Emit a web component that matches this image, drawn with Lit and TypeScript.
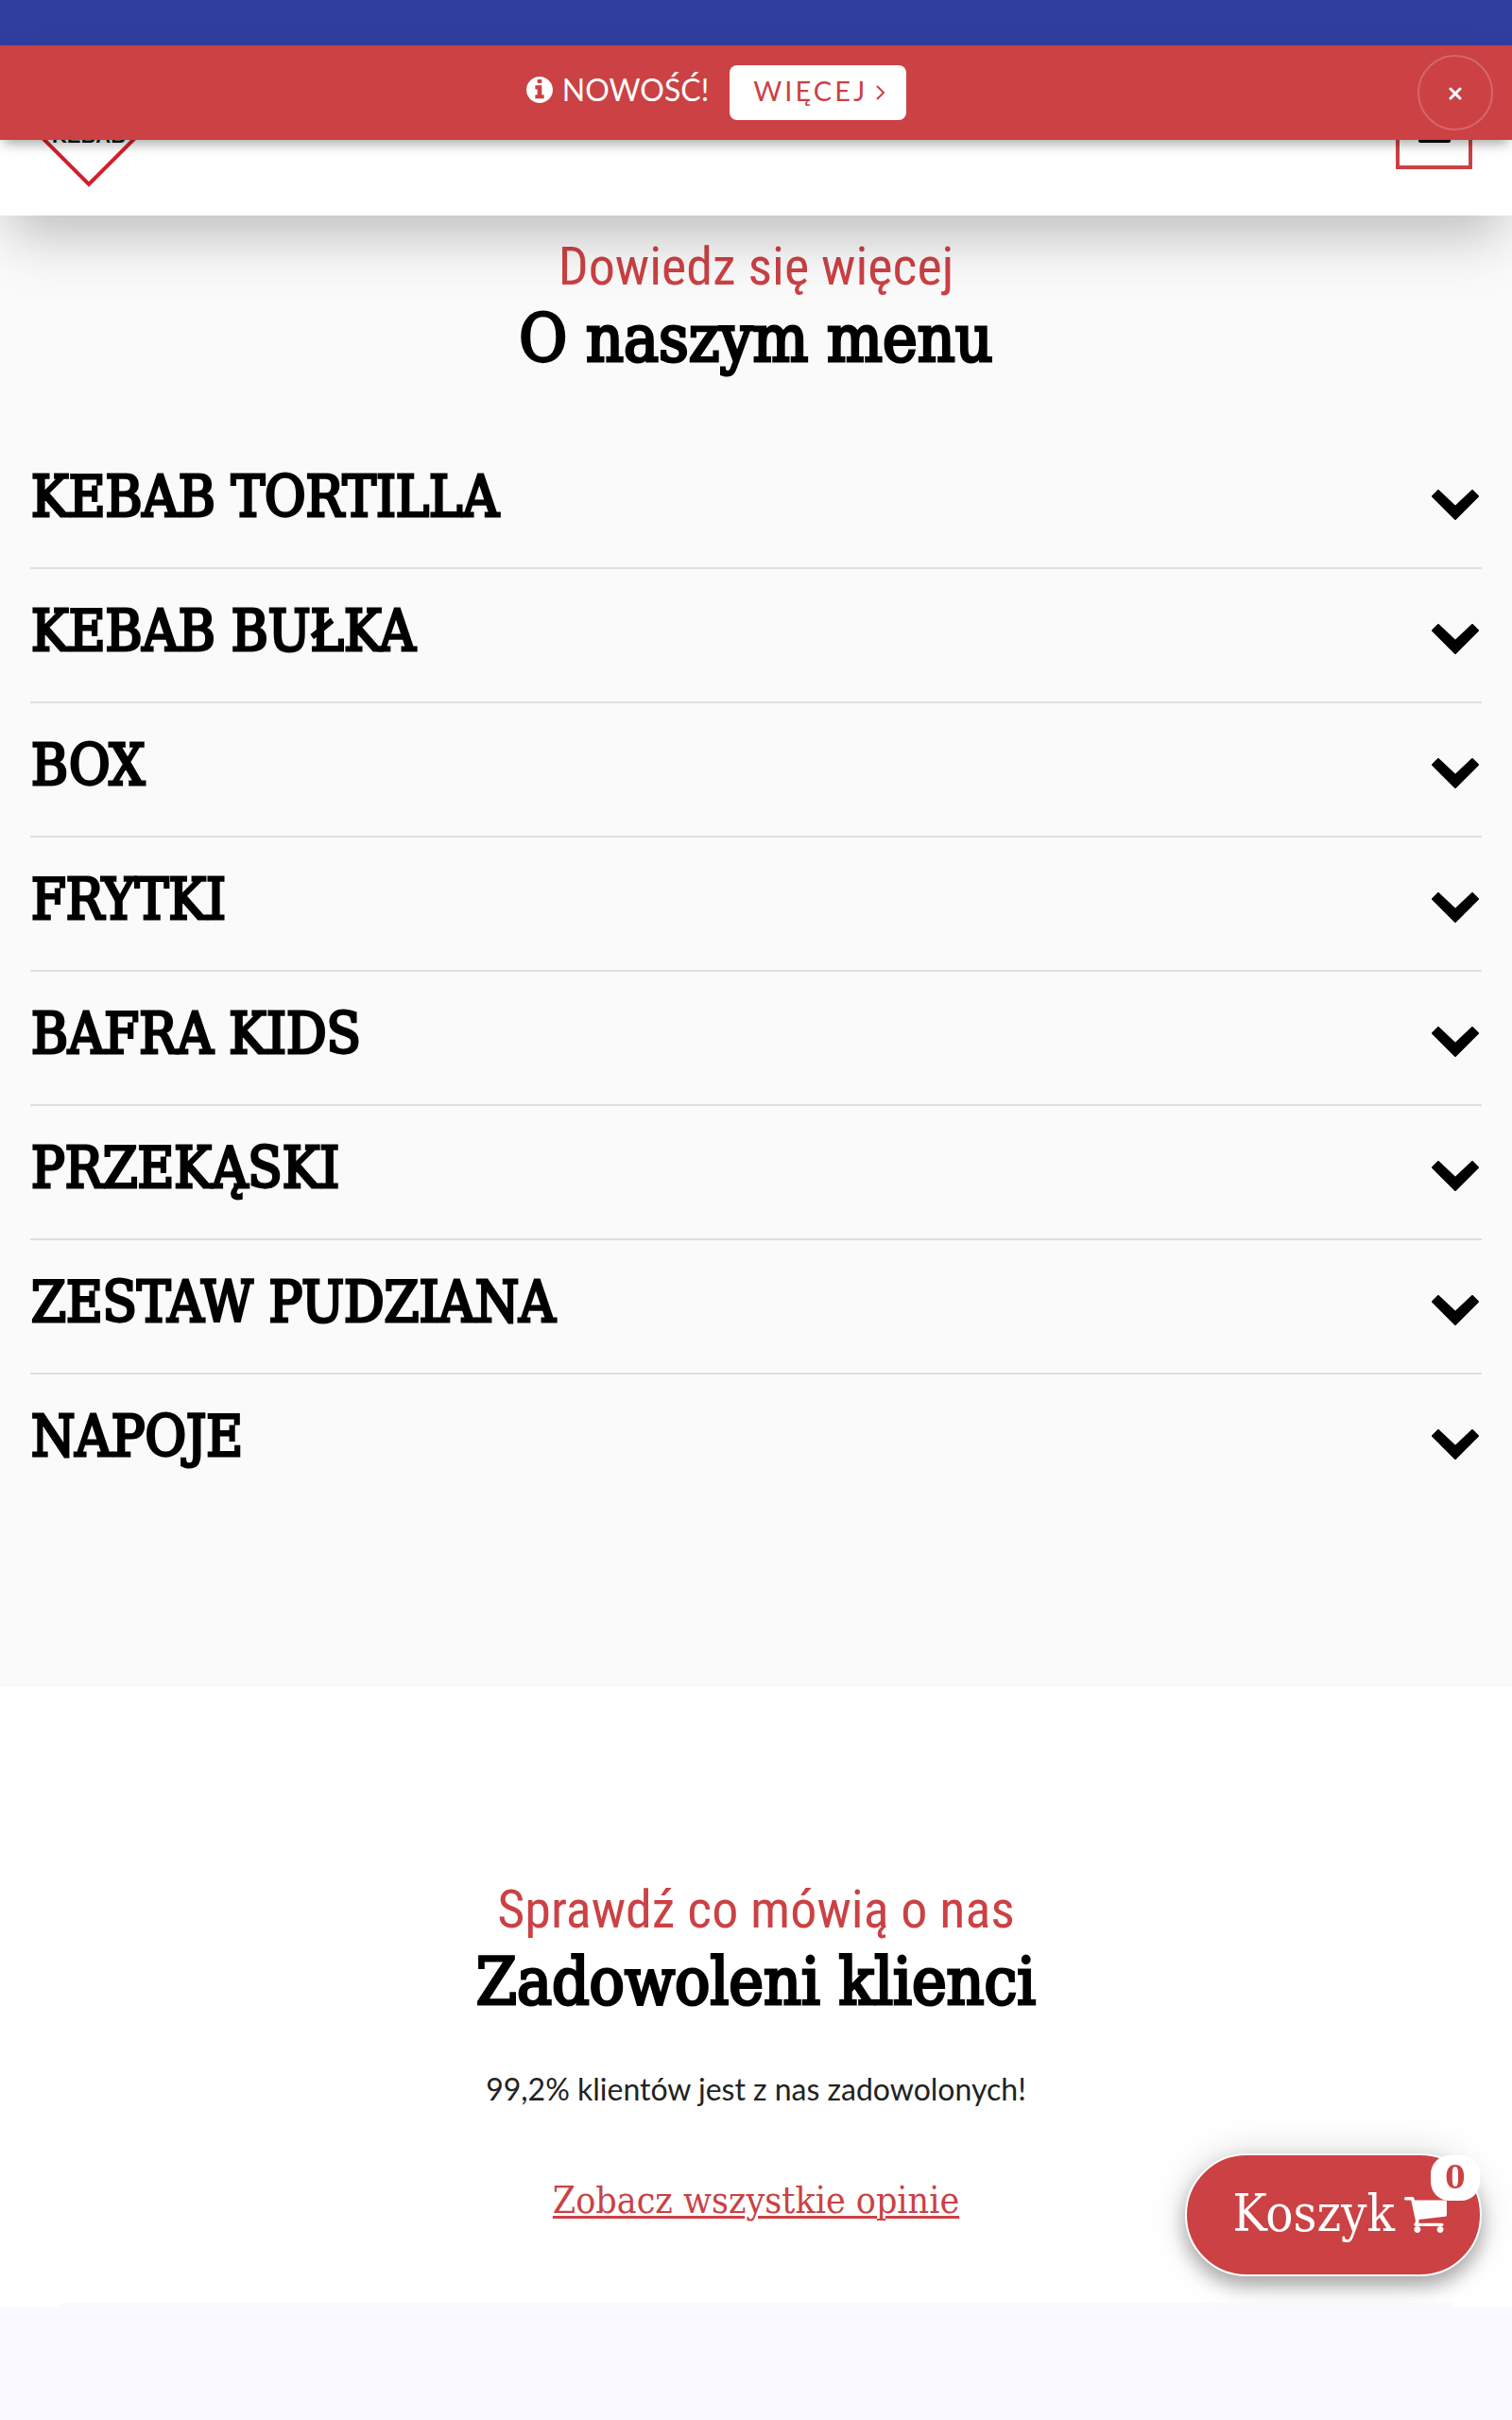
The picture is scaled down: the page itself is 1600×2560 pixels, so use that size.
import { LitElement, html, css, svg } from "lit";
import { customElement, property, state } from "lit/decorators.js";

const MENU = [
  "KEBAB TORTILLA",
  "KEBAB BUŁKA",
  "BOX",
  "FRYTKI",
  "BAFRA KIDS",
  "PRZEKĄSKI",
  "ZESTAW PUDZIANA",
  "NAPOJE",
];

const infoIcon = svg`<path d="M1152 1376v-160q0-14-9-23t-23-9h-96v-512q0-14-9-23t-23-9h-320q-14 0-23 9t-9 23v160q0 14 9 23t23 9h96v320h-96q-14 0-23 9t-9 23v160q0 14 9 23t23 9h448q14 0 23-9t9-23zm-128-896v-160q0-14-9-23t-23-9h-192q-14 0-23 9t-9 23v160q0 14 9 23t23 9h192q14 0 23-9t9-23zm640 416q0 209-103 385.500t-279.500 279.500-385.500 103-385.500-103-279.500-279.500-103-385.500 103-385.500 279.500-279.500 385.500-103 385.500 103 279.500 279.500 103 385.500z"/>`;

const cartIcon = svg`<path d="M640 1536q0 52-38 90t-90 38-90-38-38-90 38-90 90-38 90 38 38 90zm896 0q0 52-38 90t-90 38-90-38-38-90 38-90 90-38 90 38 38 90zm128-1088v512q0 24-16.500 42.500t-40.500 21.500l-1044 122q13 60 13 70 0 16-24 64h920q26 0 45 19t19 45-19 45-45 19h-1024q-26 0-45-19t-19-45q0-11 8-31.500t16-36 21.500-40 15.500-29.500l-177-823h-204q-26 0-45-19t-19-45 19-45 45-19h256q16 0 28.500 6.500t19.500 15.500 13 24.500 8 26 5.500 29.500 4.500 26h1201q26 0 45 19t19 45z"/>`;

@customElement("site-header")
export class SiteHeader extends LitElement {
  static styles = css`
    :host {
      display: block;
      position: relative;
      z-index: 1;
      font-family: Lato, "Liberation Sans", sans-serif;
    }
    .strip {
      height: 48px;
      background: #303e9f;
    }
    .bar {
      display: flex;
      align-items: center;
      justify-content: space-between;
      height: 180px;
      padding: 0 42px 0 34px;
      box-sizing: border-box;
      background: #fff;
      box-shadow: 0 30px 60px -10px rgba(0, 0, 0, 0.25);
    }
    .logo,
    .logo svg {
      display: block;
    }
    .burger {
      display: flex;
      flex-direction: column;
      align-items: center;
      justify-content: center;
      gap: 4px;
      width: 81px;
      height: 81px;
      padding: 0;
      border: 4px solid #cb4144;
      background: #fff;
    }
    .line {
      width: 34px;
      height: 6px;
      border-radius: 2px;
      background: #000;
    }
    .notice {
      position: absolute;
      top: 48px;
      left: 0;
      right: 0;
      display: flex;
      align-items: center;
      height: 100px;
      padding-right: 20px;
      box-sizing: border-box;
      background: #cb4144;
      color: #fff;
      box-shadow: 0 8px 12px -4px rgba(0, 0, 0, 0.35);
    }
    .message {
      flex: 1;
      display: flex;
      align-items: center;
      justify-content: center;
      gap: 22px;
      padding-left: 16px;
    }
    .label {
      display: flex;
      align-items: center;
      gap: 10px;
      padding-bottom: 6px;
      font-size: 32px;
      line-height: 40px;
    }
    .more {
      display: flex;
      align-items: center;
      gap: 8px;
      height: 58px;
      padding: 0 21px 0 25px;
      box-sizing: border-box;
      border-radius: 8px;
      background: #fff;
      color: #cb4144;
      font-size: 29px;
      line-height: 40px;
      letter-spacing: 3px;
      text-decoration: none;
    }
    .more span {
      padding-bottom: 4px;
    }
    .close {
      display: flex;
      align-items: center;
      justify-content: center;
      width: 80px;
      height: 80px;
      padding: 0;
      border: 2px solid rgba(255, 255, 255, 0.2);
      border-radius: 50%;
      background: none;
    }
  `;

  @state() private noticeOpen = true;

  render() {
    return html`
      <div class="strip"></div>
      <header class="bar">
        <a class="logo" href="#" aria-label="Kebab">
          <svg width="120" height="120" viewBox="0 0 120 120">
            <path d="M60 3 117 60 60 117 3 60Z" fill="#fff" stroke="#d2202c" stroke-width="4" />
            <text x="60" y="73" text-anchor="middle" font-family="Liberation Sans, sans-serif" font-weight="700" font-size="22" fill="#111">KEBAB</text>
          </svg>
        </a>
        <button class="burger" type="button" aria-label="Menu">
          <span class="line"></span><span class="line"></span><span class="line"></span>
        </button>
      </header>
      ${this.noticeOpen
        ? html`<div class="notice" role="status">
            <div class="message">
              <span class="label">
                <svg width="28" height="28" viewBox="128 128 1536 1536" fill="currentColor">${infoIcon}</svg>
                NOWOŚĆ!
              </span>
              <a class="more" href="#nowosc">
                <span>WIĘCEJ</span>
                <svg width="12" height="18" viewBox="0 0 12 18" fill="none" stroke="currentColor" stroke-width="2">
                  <path d="M2 2 9 9 2 16" />
                </svg>
              </a>
            </div>
            <button class="close" type="button" aria-label="Zamknij" @click=${() => (this.noticeOpen = false)}>
              <svg width="16" height="16" viewBox="0 0 16 16" stroke="#fff" stroke-width="3" stroke-linecap="round">
                <path d="M3 4 13 14M13 4 3 14" />
              </svg>
            </button>
          </div>`
        : null}
    `;
  }
}

@customElement("section-title")
export class SectionTitle extends LitElement {
  static styles = css`
    :host {
      display: block;
      text-align: center;
    }
    .kicker {
      margin: 0;
      color: #cb4144;
      font: 400 56px/72px "Roboto Condensed", "Liberation Sans Narrow", sans-serif;
    }
    .title {
      margin: 0;
      color: #000;
      font: 400 69px/80px "DejaVu Serif Condensed", "DejaVu Serif", serif;
      -webkit-text-stroke: 3px #000;
    }
  `;

  @property() kicker = "";
  @property() heading = "";

  render() {
    return html`<p class="kicker">${this.kicker}</p>
      <h2 class="title">${this.heading}</h2>`;
  }
}

@customElement("menu-list")
export class MenuList extends LitElement {
  static styles = css`
    :host {
      display: block;
    }
    .list {
      list-style: none;
      margin: 0;
      padding: 0;
    }
    .item + .item {
      border-top: 2px solid #dfdfdf;
    }
    .row {
      display: flex;
      align-items: center;
      justify-content: space-between;
      width: 100%;
      height: 140px;
      padding: 0 3px 0 1px;
      border: 0;
      background: none;
      color: #000;
      font: 400 59px/80px "DejaVu Serif Condensed", "DejaVu Serif", serif;
      -webkit-text-stroke: 3px #000;
      text-align: left;
    }
    .name {
      padding-bottom: 8px;
    }
    .chevron {
      padding-top: 8px;
    }
  `;

  render() {
    return html`<ul class="list">
      ${MENU.map(
        (name) => html`<li class="item">
          <button class="row" type="button" aria-expanded="false">
            <span class="name">${name}</span>
            <svg class="chevron" width="50" height="33" viewBox="0 0 50 33">
              <path d="M7 1 25 18 43 1 49 7 25 31 1 7Z" stroke="#000" stroke-width="2" stroke-linejoin="round" />
            </svg>
          </button>
        </li>`,
      )}
    </ul>`;
  }
}

@customElement("cart-button")
export class CartButton extends LitElement {
  static styles = css`
    :host {
      position: fixed;
      right: 32px;
      bottom: 152px;
      z-index: 2;
    }
    .cart {
      position: relative;
      display: flex;
      align-items: center;
      gap: 10px;
      height: 130px;
      padding: 0 35px 0 49px;
      box-sizing: border-box;
      border: 2px solid #fff;
      border-radius: 65px;
      background: #cb4144;
      color: #fff;
      font: 400 54px/60px "DejaVu Serif Condensed", "DejaVu Serif", serif;
      box-shadow: 0 10px 20px rgba(0, 0, 0, 0.3), 0 0 40px rgba(0, 0, 0, 0.15);
    }
    .label {
      padding-bottom: 2px;
    }
    .count {
      position: absolute;
      top: 0;
      right: 0;
      width: 52px;
      height: 48px;
      border-radius: 20px;
      background: #fff;
      color: #cb4144;
      font-size: 34px;
      font-weight: 700;
      line-height: 46px;
      text-align: center;
    }
  `;

  @property({ type: Number }) count = 0;

  render() {
    return html`<button class="cart" type="button">
      <span class="label">Koszyk</span>
      <svg width="45" height="38" viewBox="0 256 1664 1408" fill="currentColor">${cartIcon}</svg>
      <span class="count">${this.count}</span>
    </button>`;
  }
}

@customElement("app-root")
export class AppRoot extends LitElement {
  static styles = css`
    :host {
      display: flex;
      flex-direction: column;
      min-height: 100vh;
      background: #faf9ff;
    }
    .menu {
      padding: 18px 32px 190px;
      background: #fafafa;
    }
    .menu menu-list {
      margin-top: 62px;
    }
    .reviews {
      display: flex;
      flex-direction: column;
      align-items: center;
      padding: 200px 32px 86px;
      background: linear-gradient(#fafafa, #fafafa) bottom / calc(100% - 128px) 4px no-repeat #fff;
    }
    .rating {
      margin: 50px 0 0;
      color: #222;
      font: 400 32px/48px Lato, "Liberation Sans", sans-serif;
    }
    .all {
      margin-top: 68px;
      color: #cb4144;
      font: 400 39px/52px "DejaVu Serif Condensed", "DejaVu Serif", serif;
      text-decoration-thickness: 3px;
      text-underline-offset: 3px;
    }
  `;

  render() {
    return html`
      <site-header></site-header>
      <section class="menu">
        <section-title kicker="Dowiedz się więcej" heading="O naszym menu"></section-title>
        <menu-list></menu-list>
      </section>
      <section class="reviews">
        <section-title kicker="Sprawdź co mówią o nas" heading="Zadowoleni klienci"></section-title>
        <p class="rating">99,2% klientów jest z nas zadowolonych!</p>
        <a class="all" href="#opinie">Zobacz wszystkie opinie</a>
      </section>
      <cart-button></cart-button>
    `;
  }
}
